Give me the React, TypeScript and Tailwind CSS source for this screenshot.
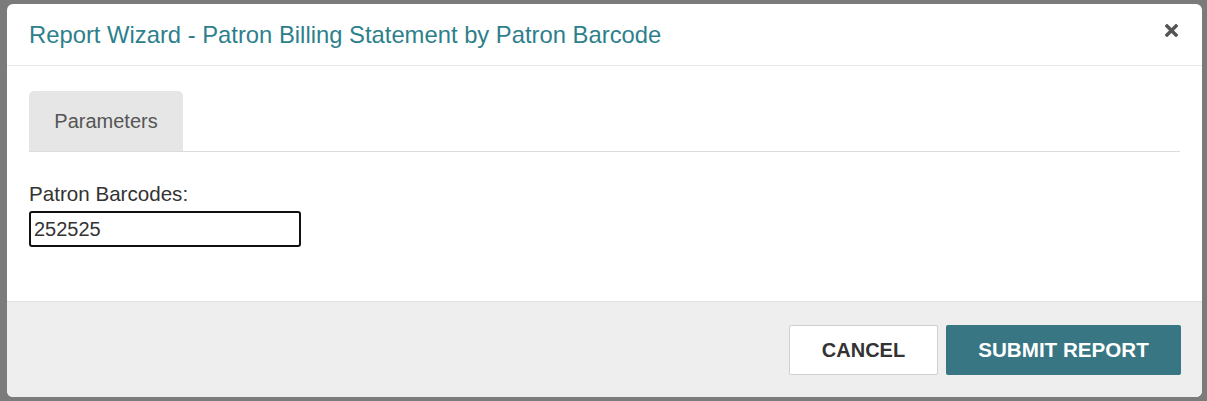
import React, { useState } from "react";

export default function App() {
  const [barcodes, setBarcodes] = useState("252525");

  return (
    <div className="h-[401px] w-[1207px] bg-[#7b7b7b] pt-[4px] pl-[7px] pr-[5px] pb-[4px] font-['Liberation_Sans',Arial,sans-serif]">
      <div className="flex h-full flex-col overflow-hidden rounded-[6px] bg-white">
        {/* Header */}
        <div className="flex h-[62px] shrink-0 items-center justify-between border-b border-[#e8e8e8] pl-[22px] pr-[24px]">
          <h4 className="text-[23.8px] leading-none text-[#2e7f8c]">
            Report Wizard - Patron Billing Statement by Patron Barcode
          </h4>
          <button className="-mt-[8px] text-[#555]" title="Close">
            <svg width="13" height="13" viewBox="0 0 13 13">
              <path
                d="M2 2 L11 11 M11 2 L2 11"
                stroke="currentColor"
                strokeWidth="3.4"
                strokeLinecap="square"
              />
            </svg>
          </button>
        </div>

        {/* Body */}
        <div className="flex-1 px-[22px] pt-[25px]">
          <div className="flex border-b border-[#dcdcdc]">
            <div className="flex h-[60px] w-[154px] items-center justify-center rounded-t-[5px] bg-[#e6e6e6] text-[20px] text-[#555]">
              Parameters
            </div>
          </div>
          <div className="pt-[31px]">
            <label className="block text-[20.6px] leading-[22px] text-[#333]">
              Patron Barcodes:
            </label>
            <input
              value={barcodes}
              onChange={(e) => setBarcodes(e.target.value)}
              className="mt-[6px] h-[36px] w-[272px] rounded-[3px] border-2 border-[#111] px-[3px] text-[20px] text-[#333] outline-none"
            />
          </div>
        </div>

        {/* Footer */}
        <div className="flex h-[96px] shrink-0 items-start justify-end gap-[8px] border-t border-[#e2e2e2] bg-[#eeeeee] pr-[21px] pt-[23px]">
          <button className="h-[50px] w-[149px] rounded-[2px] border border-[#cfcfcf] bg-white text-[20px] font-bold text-[#333]">
            CANCEL
          </button>
          <button className="h-[50px] w-[235px] rounded-[2px] bg-[#387683] text-[20.6px] font-bold text-white">
            SUBMIT REPORT
          </button>
        </div>
      </div>
    </div>
  );
}
